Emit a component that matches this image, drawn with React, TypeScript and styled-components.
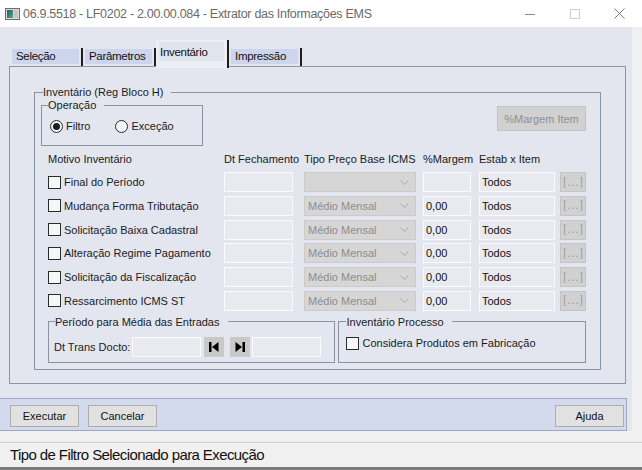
import React from 'react';
import styled, { createGlobalStyle } from 'styled-components';

const uiFont = `'Liberation Sans', Arial, sans-serif`;
// no narrow face installed: squeeze the regular one a bit
const narrowFont = `'Liberation Sans Narrow', 'Liberation Sans', Arial, sans-serif`;

const GlobalStyle = createGlobalStyle`
  html, body {
    margin: 0;
    padding: 0;
    background: #f0f0f0;
  }
  * {
    box-sizing: border-box;
  }
`;

const Window = styled.div`
  width: 642px;
  height: 470px;
  display: flex;
  flex-direction: column;
  background: #f0f0f0;
  border-bottom: 3px solid #7b7b7b;
  overflow: hidden;
  font-family: ${uiFont};
  font-size: 11px;
  color: #1b1b1b;
`;

const TitleBar = styled.div`
  height: 27px;
  flex: none;
  background: #fff;
  display: flex;
  align-items: center;
  padding-left: 5px;
`;

const TitleText = styled.span`
  flex: 1;
  margin-left: 3px;
  font-family: ${narrowFont};
  font-size: 12.5px;
  letter-spacing: -0.3px;
  color: #6a6a6a;
  white-space: nowrap;
`;

const WinButton = styled.div`
  width: 45px;
  height: 27px;
  display: flex;
  align-items: center;
  justify-content: center;
`;

const Upper = styled.div`
  width: 632px;
  height: 404px;
  flex: none;
  background: #e3e6ee;
  padding-top: 13px;
  display: flex;
  flex-direction: column;
`;

const TabStrip = styled.div`
  height: 26px;
  margin-left: 10px;
  display: flex;
  align-items: flex-end;
`;

const Tab = styled.div`
  width: 73px;
  height: 18px;
  padding: 1px 2px 2px 2px;
  border-right: 2px solid #1e1e1e;
  display: flex;
`;

const TabFill = styled.div`
  flex: 1;
  background: #ccd5eb;
  padding-left: 4px;
  display: flex;
  align-items: flex-end;
  font-family: ${narrowFont};
  font-size: 11.5px;
  letter-spacing: -0.3px;
  line-height: 15px;
  color: #111;
`;

const ActiveTab = styled.div`
  position: relative;
  z-index: 1;
  width: 73px;
  height: 28px;
  margin-bottom: -2px;
  padding: 2px 3px 7px 3px;
  background: #eceef3;
  border-right: 2px solid #1e1e1e;
  display: flex;
`;

const ActiveTabFill = styled.div`
  flex: 1;
  background: #e0e4ee;
  padding: 3px 0 0 1px;
  font-family: ${narrowFont};
  font-size: 11.5px;
  letter-spacing: -0.3px;
  line-height: 14px;
  color: #111;
`;

const Panel = styled.div`
  width: 617px;
  height: 318px;
  margin-left: 9px;
  border: 1px solid #8d94a5;
  background: #e3e6ee;
  padding-top: 18px;
`;

const GroupBox = styled.fieldset<{ $w?: number }>`
  margin: 0;
  padding: 0;
  min-width: 0;
  border: 1px solid #8b92a3;
  ${p => (p.$w ? `width: ${p.$w}px;` : '')}
`;

const Legend = styled.legend<{ $ml?: number }>`
  margin-left: ${p => p.$ml ?? 7}px;
  padding: 0 8px 0 0;
  font-size: 11px;
  line-height: 14px;
  color: #1b1b1b;
`;

const OuterGroup = styled(GroupBox)`
  margin: 0 24px;
`;

const OuterContent = styled.div`
  padding: 0 14px 6px 6px;
`;

const TopRow = styled.div`
  display: flex;
  justify-content: space-between;
  align-items: flex-start;
  margin-top: -1px;
`;

const RadioRow = styled.div`
  height: 33px;
  padding: 8px 0 0 8px;
  display: flex;
  align-items: flex-start;
  gap: 25px;
`;

const OptionItem = styled.label`
  display: flex;
  align-items: center;
  gap: 3px;
  line-height: 13px;
`;

const RadioCircle = styled.span<{ $on?: boolean }>`
  width: 13px;
  height: 13px;
  border-radius: 50%;
  border: 1px solid #2b2b2b;
  background: #f3f4f7;
  display: flex;
  align-items: center;
  justify-content: center;

  &::after {
    content: '';
    width: 7px;
    height: 7px;
    border-radius: 50%;
    background: ${p => (p.$on ? '#1f1f1f' : 'transparent')};
  }
`;

const CheckBox = styled.span`
  width: 13px;
  height: 13px;
  flex: none;
  border: 1px solid #2b2b2b;
  background: #f6f7f9;
`;

const DisabledButton = styled.div<{ $w: number; $h: number }>`
  width: ${p => p.$w}px;
  height: ${p => p.$h}px;
  background: #d1d1d1;
  border: 1px solid #c4c4c4;
  color: #8f8f8f;
  display: flex;
  align-items: center;
  justify-content: center;
`;

const MarginButton = styled(DisabledButton)`
  margin-top: 8px;
`;

const DotsButton = styled(DisabledButton)`
  font-family: 'Liberation Serif', serif;
  font-size: 12px;
  color: #9c9c9c;
`;

const Grid = styled.div`
  margin-left: 7px;
  display: grid;
  grid-template-columns: 176px 80px 119px 56px 81px 26px;
  align-items: center;
`;

const HeaderGrid = styled(Grid)`
  margin-top: 6px;
  line-height: 14px;
`;

const RowsGrid = styled(Grid)`
  margin-top: 6px;
  grid-auto-rows: 20px;
  row-gap: 3.8px;
`;

const Motive = styled.div`
  display: flex;
  align-items: center;
  gap: 3px;
  white-space: nowrap;
`;

const Field = styled.div<{ $w: number; $ml?: number }>`
  width: ${p => p.$w}px;
  height: 20px;
  margin-left: ${p => p.$ml ?? 0}px;
  border: 1px solid #fafbfc;
  background: #e8eaf0;
  padding-left: 2px;
  display: flex;
  align-items: center;
  color: #111;
`;

const Combo = styled.div`
  width: 112px;
  height: 20px;
  border: 1px solid #cbcbcb;
  background: #d6d6d6;
  padding: 0 6px 0 3px;
  display: flex;
  align-items: center;
  justify-content: space-between;
  color: #8d8d8d;
`;

const BottomRow = styled.div`
  margin: 4px 0 0 7px;
  display: flex;
  gap: 3px;
`;

const PeriodContent = styled.div`
  height: 33px;
  padding: 8px 0 0 5px;
  display: flex;
  align-items: flex-start;
`;

const FieldLabel = styled.span`
  width: 78px;
  height: 20px;
  line-height: 20px;
  white-space: nowrap;
`;

const NavButton = styled.div<{ $ml: number }>`
  width: 20px;
  height: 20px;
  margin-left: ${p => p.$ml}px;
  background: #c9c9c9;
  display: flex;
  align-items: center;
  justify-content: center;
`;

const ProcessContent = styled.div`
  height: 33px;
  padding: 8px 0 0 7px;
`;

const ButtonBar = styled.div`
  width: 627px;
  height: 33px;
  margin-top: 14px;
  background: #d3daee;
  border: 1px solid #9ea8bf;
  border-left: none;
  padding: 2px 2px 0 10px;
  display: flex;
  align-items: center;
  gap: 9px;
`;

const PushButton = styled.div`
  width: 69px;
  height: 22px;
  background: #e1e1e1;
  border: 1px solid #adadad;
  display: flex;
  align-items: center;
  justify-content: center;
  color: #111;
`;

const BarSpacer = styled.div`
  flex: 1;
`;

const Gap = styled.div`
  height: 11px;
  flex: none;
`;

const StatusBar = styled.div`
  height: 25px;
  flex: none;
  border-top: 1px solid #cfcfcf;
  padding-left: 10px;
  font-family: ${narrowFont};
  font-size: 15px;
  letter-spacing: -0.6px;
  line-height: 23px;
  color: #111;
`;

const motives = [
  { label: 'Final do Período', first: true },
  { label: 'Mudança Forma Tributação' },
  { label: 'Solicitação Baixa Cadastral' },
  { label: 'Alteração Regime Pagamento' },
  { label: 'Solicitação da Fiscalização' },
  { label: 'Ressarcimento ICMS ST' },
];

const AppIcon = () => (
  <svg width="15" height="12" viewBox="0 0 15 12">
    <defs>
      <linearGradient id="ico" x1="0" y1="0" x2="1" y2="1">
        <stop offset="0" stopColor="#1d5a86" />
        <stop offset="1" stopColor="#5ea86b" />
      </linearGradient>
    </defs>
    <rect x="0.5" y="0.5" width="14" height="11" fill="#d9d9d9" stroke="#6f6f6f" />
    <rect x="2" y="2" width="6" height="8" fill="url(#ico)" />
    <rect x="9" y="2" width="4" height="8" fill="#c4c4c4" />
  </svg>
);

const Chevron = () => (
  <svg width="9" height="5" viewBox="0 0 9 5">
    <polyline points="0.5,0.5 4.5,4.5 8.5,0.5" fill="none" stroke="#a9a9a9" strokeWidth="1" />
  </svg>
);

const FirstIcon = () => (
  <svg width="12" height="12" viewBox="0 0 12 12">
    <rect x="1" y="1" width="2.5" height="10" fill="#000" />
    <polygon points="10.5,1 4,6 10.5,11" fill="#000" />
  </svg>
);

const LastIcon = () => (
  <svg width="12" height="12" viewBox="0 0 12 12">
    <polygon points="1.5,1 8,6 1.5,11" fill="#000" />
    <rect x="8.5" y="1" width="2.5" height="10" fill="#000" />
  </svg>
);

export default function App() {
  return (
    <>
      <GlobalStyle />
      <Window>
        <TitleBar>
          <AppIcon />
          <TitleText>06.9.5518 - LF0202 - 2.00.00.084 - Extrator das Informações EMS</TitleText>
          <WinButton>
            <svg width="10" height="10" viewBox="0 0 10 10">
              <line x1="0" y1="5.5" x2="10" y2="5.5" stroke="#8a8a8a" />
            </svg>
          </WinButton>
          <WinButton>
            <svg width="10" height="10" viewBox="0 0 10 10">
              <rect x="0.5" y="0.5" width="9" height="9" fill="none" stroke="#cfcfcf" />
            </svg>
          </WinButton>
          <WinButton>
            <svg width="11" height="11" viewBox="0 0 11 11">
              <path d="M0.5 0.5 L10.5 10.5 M10.5 0.5 L0.5 10.5" stroke="#7a7a7a" />
            </svg>
          </WinButton>
        </TitleBar>

        <Upper>
          <TabStrip>
            <Tab><TabFill>Seleção</TabFill></Tab>
            <Tab><TabFill>Parâmetros</TabFill></Tab>
            <ActiveTab><ActiveTabFill>Inventário</ActiveTabFill></ActiveTab>
            <Tab><TabFill>Impressão</TabFill></Tab>
          </TabStrip>

          <Panel>
            <OuterGroup>
              <Legend $ml={8}>Inventário (Reg Bloco H)</Legend>
              <OuterContent>
                <TopRow>
                  <GroupBox $w={162}>
                    <Legend $ml={6}>Operação</Legend>
                    <RadioRow>
                      <OptionItem><RadioCircle $on />Filtro</OptionItem>
                      <OptionItem><RadioCircle />Exceção</OptionItem>
                    </RadioRow>
                  </GroupBox>
                  <MarginButton $w={89} $h={25}>%Margem Item</MarginButton>
                </TopRow>

                <HeaderGrid>
                  <span>Motivo Inventário</span>
                  <span>Dt Fechamento</span>
                  <span>Tipo Preço Base ICMS</span>
                  <span>%Margem</span>
                  <span>Estab x Item</span>
                  <span />
                </HeaderGrid>

                <RowsGrid>
                  {motives.map(m => (
                    <React.Fragment key={m.label}>
                      <Motive><CheckBox />{m.label}</Motive>
                      <Field $w={69} />
                      <Combo>
                        <span>{m.first ? '' : 'Médio Mensal'}</span>
                        <Chevron />
                      </Combo>
                      <Field $w={48}>{m.first ? '' : '0,00'}</Field>
                      <Field $w={76}>Todos</Field>
                      <DotsButton $w={26} $h={20}>[…]</DotsButton>
                    </React.Fragment>
                  ))}
                </RowsGrid>

                <BottomRow>
                  <GroupBox $w={288}>
                    <Legend $ml={6}>Período para Média das Entradas</Legend>
                    <PeriodContent>
                      <FieldLabel>Dt Trans Docto:</FieldLabel>
                      <Field $w={69} />
                      <NavButton $ml={3}><FirstIcon /></NavButton>
                      <NavButton $ml={6}><LastIcon /></NavButton>
                      <Field $w={69} $ml={2} />
                    </PeriodContent>
                  </GroupBox>
                  <GroupBox $w={248}>
                    <Legend>Inventário Processo</Legend>
                    <ProcessContent>
                      <OptionItem><CheckBox />Considera Produtos em Fabricação</OptionItem>
                    </ProcessContent>
                  </GroupBox>
                </BottomRow>
              </OuterContent>
            </OuterGroup>
          </Panel>

          <ButtonBar>
            <PushButton>Executar</PushButton>
            <PushButton>Cancelar</PushButton>
            <BarSpacer />
            <PushButton>Ajuda</PushButton>
          </ButtonBar>
        </Upper>

        <Gap />
        <StatusBar>Tipo de Filtro Selecionado para Execução</StatusBar>
      </Window>
    </>
  );
}
